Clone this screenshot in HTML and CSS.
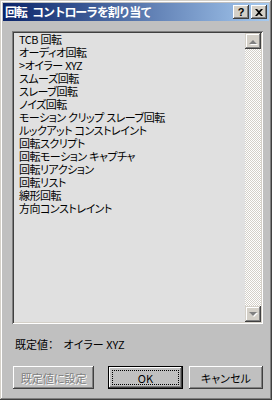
FILE: index.html
```html
<!DOCTYPE html>
<html lang="ja">
<head>
    <meta charset="UTF-8">
    <title>回転 コントローラを割り当て</title>
    <link rel="stylesheet" href="styles.css">
</head>
<body>
    <div class="window">
        <div class="titlebar">
            <span class="title">回転 コントローラを割り当て</span>
            <div class="title-buttons">
                <button class="cap-btn">?</button>
                <button class="cap-btn close">
                    <svg width="8" height="7" viewBox="0 0 8 7"><path d="M0 0h2l2 2 2-2h2L5 3.5 8 7H6L4 5 2 7H0l3-3.5z" fill="#000"/></svg>
                </button>
            </div>
        </div>

        <div class="content">
            <div class="listbox">
                <ul class="items">
                    <li>TCB 回転</li>
                    <li>オーディオ回転</li>
                    <li>&gt;オイラー XYZ</li>
                    <li>スムーズ回転</li>
                    <li>スレーブ回転</li>
                    <li>ノイズ回転</li>
                    <li>モーション クリップ スレーブ回転</li>
                    <li>ルックアット コンストレイント</li>
                    <li>回転スクリプト</li>
                    <li>回転モーション キャプチャ</li>
                    <li>回転リアクション</li>
                    <li>回転リスト</li>
                    <li>線形回転</li>
                    <li>方向コンストレイント</li>
                </ul>
                <div class="scrollbar">
                    <div class="sb-btn">
                        <svg width="12" height="12" viewBox="0 0 12 12"><path d="M2 9h8L6 5z" fill="#fff" transform="translate(1 1)"/><path d="M2 9h8L6 5z" fill="#808080"/></svg>
                    </div>
                    <div class="sb-track"></div>
                    <div class="sb-btn">
                        <svg width="12" height="12" viewBox="0 0 12 12"><path d="M2 4h8L6 8z" fill="#fff" transform="translate(1 1)"/><path d="M2 4h8L6 8z" fill="#808080"/></svg>
                    </div>
                </div>
            </div>

            <div class="default-row">
                <span>既定値：</span>
                <span class="default-value">オイラー XYZ</span>
            </div>

            <div class="buttons">
                <button class="btn wide" disabled>既定値に設定</button>
                <button class="btn default"><span class="focus">OK</span></button>
                <button class="btn">キャンセル</button>
            </div>
        </div>
    </div>
</body>
</html>
```

FILE: styles.css
```css
* {
    box-sizing: border-box;
    margin: 0;
    padding: 0;
}

body {
    font-family: "Noto Sans CJK JP", "DejaVu Sans", sans-serif;
    font-size: 11px;
    font-feature-settings: "palt";
    background: #c0c0c0;
}

.window {
    width: 272px;
    height: 400px;
    padding: 3px;
    background: #c0c0c0;
    box-shadow: inset -1px -1px #404040, inset 1px 1px #d4d0c8,
                inset -2px -2px #808080, inset 2px 2px #fff;
    display: flex;
    flex-direction: column;
}

.titlebar {
    height: 18px;
    display: flex;
    align-items: center;
    justify-content: space-between;
    padding: 0 2px 0 2px;
    background: linear-gradient(to right, #0a246a, #a6caf0);
}

.title {
    color: #fff;
    font-weight: bold;
    font-size: 12px;
    font-feature-settings: normal;
    letter-spacing: -1.2px;
    word-spacing: 4px;
    line-height: 14px;
}

.title-buttons {
    display: flex;
    gap: 2px;
}

.cap-btn {
    width: 16px;
    height: 14px;
    border: none;
    background: #d4d0c8;
    box-shadow: inset -1px -1px #404040, inset 1px 1px #fff,
                inset -2px -2px #808080;
    font-family: "Liberation Sans", sans-serif;
    font-weight: bold;
    font-size: 11px;
    line-height: 14px;
    color: #000;
    display: flex;
    align-items: center;
    justify-content: center;
}

.content {
    flex: 1;
    padding: 10px 6px 0 9px;
    display: flex;
    flex-direction: column;
}

.listbox {
    width: 251px;
    height: 293px;
    padding: 2px;
    background: #e0e0e0;
    box-shadow: inset 1px 1px #808080, inset -1px -1px #fff,
                inset 2px 2px #404040, inset -2px -2px #d4d0c8;
    display: flex;
}

.items {
    flex: 1;
    list-style: none;
    padding: 0 5px;
    line-height: 13px;
    letter-spacing: -0.5px;
    word-spacing: 0.5px;
    color: #000;
    white-space: nowrap;
}

.scrollbar {
    width: 16px;
    display: flex;
    flex-direction: column;
}

.sb-btn {
    height: 16px;
    background: #d4d0c8;
    box-shadow: inset -1px -1px #404040, inset 1px 1px #d4d0c8,
                inset -2px -2px #808080, inset 2px 2px #fff;
    display: flex;
    align-items: center;
    justify-content: center;
}

.sb-track {
    flex: 1;
    background: repeating-conic-gradient(#fff 0 25%, #d4d0c8 0 50%) 0 0 / 2px 2px;
}

.default-row {
    margin-top: 14px;
    padding-left: 3px;
    line-height: 12px;
    display: flex;
    color: #000;
}

.default-value {
    margin-left: 10px;
}

.buttons {
    margin-top: 16px;
    display: flex;
    gap: 6px;
}

.btn {
    width: 75px;
    height: 23px;
    border: none;
    background: #c0c0c0;
    font-family: inherit;
    font-size: 11px;
    font-feature-settings: "palt";
    color: #000;
    box-shadow: inset -1px -1px #404040, inset 1px 1px #fff,
                inset -2px -2px #808080;
}

.btn.wide {
    width: 82px;
    margin-left: 1px;
    margin-right: 8px;
}

.btn:disabled {
    color: #808080;
    text-shadow: 1px 1px #fff;
}

.btn.default {
    box-shadow: inset 0 0 0 1px #000, inset -2px -2px #404040,
                inset 2px 2px #fff, inset -3px -3px #808080;
    padding: 4px;
}

.focus {
    display: flex;
    align-items: center;
    justify-content: center;
    height: 100%;
    border: 1px dotted #000;
}
```
